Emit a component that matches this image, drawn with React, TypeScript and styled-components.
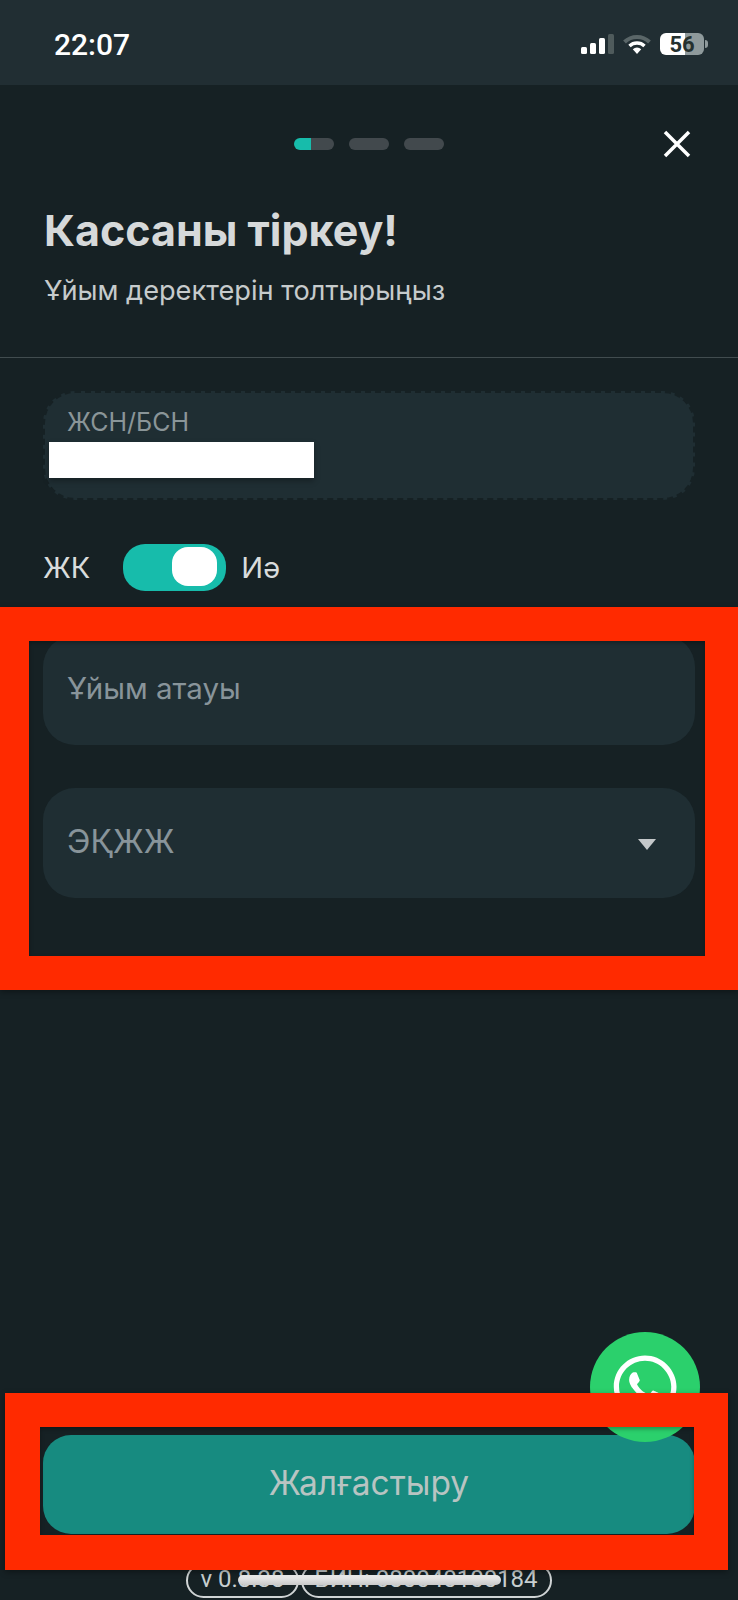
import React from "react";
import styled, { createGlobalStyle } from "styled-components";
import { FaWhatsapp } from "react-icons/fa";

const Global = createGlobalStyle`
  html, body { margin: 0; padding: 0; background: #162124; }
  * { box-sizing: border-box; }
`;

const Page = styled.div`
  position: relative;
  width: 738px;
  height: 1600px;
  overflow: hidden;
  display: flex;
  flex-direction: column;
  background: #162124;
  font-family: "Inter", "Noto Sans", sans-serif;
`;

const StatusBar = styled.div`
  height: 85px;
  flex: none;
  display: flex;
  align-items: center;
  justify-content: space-between;
  padding: 3px 34px 0 54px;
  background: #212e33;
`;

const Time = styled.span`
  font-family: "Roboto", sans-serif;
  font-size: 30px;
  font-weight: 500;
  color: #fff;
`;

const StatusIcons = styled.div`
  display: flex;
  align-items: center;
  gap: 9px;
`;

const Battery = styled.div`
  position: relative;
  width: 44px;
  height: 22px;
  border-radius: 6px;
  display: flex;
  align-items: center;
  justify-content: center;
  background: linear-gradient(90deg, #fff 57%, #8f9a9c 57%);
  font-family: "Roboto", sans-serif;
  font-size: 22px;
  font-weight: 700;
  color: #25312f;
  &::after {
    content: "";
    position: absolute;
    right: -4px;
    top: 7px;
    width: 3px;
    height: 8px;
    border-radius: 0 3px 3px 0;
    background: #8f9a9c;
  }
`;

const StepRow = styled.div`
  display: grid;
  grid-template-columns: 1fr auto 1fr;
  align-items: center;
  height: 40px;
  margin-top: 39px;
  padding: 0 46px;
`;

const Steps = styled.div`
  grid-column: 2;
  display: flex;
  gap: 15px;
`;

const Step = styled.div<{ $fill: number }>`
  width: 40px;
  height: 12px;
  border-radius: 6px;
  background: linear-gradient(90deg, #17bcab ${(p) => p.$fill}%, #42494d ${(p) => p.$fill}%);
`;

const CloseButton = styled.div`
  grid-column: 3;
  justify-self: end;
  display: flex;
  line-height: 0;
`;

const Title = styled.h1`
  margin: 41px 0 0;
  padding: 0 44px;
  height: 50px;
  line-height: 50px;
  font-size: 43px;
  font-weight: 700;
  color: #d6d9da;
`;

const Subtitle = styled.p`
  margin: 20px 0 0;
  padding: 0 44px;
  height: 32px;
  line-height: 32px;
  font-size: 27.2px;
  font-weight: 400;
  color: #c6cbcc;
`;

const Divider = styled.div`
  height: 1px;
  margin-top: 50px;
  background: #414c4f;
`;

const Form = styled.div`
  display: flex;
  flex-direction: column;
  padding: 0 43px;
`;

const IdField = styled.div`
  position: relative;
  height: 109px;
  margin-top: 33px;
  padding: 13px 22px;
  border: 2px dashed #162124;
  border-radius: 32px;
  background: #1f2e33;
  background-clip: border-box;
  font-size: 25px;
  line-height: 32px;
  color: #8a9598;
`;

const Redaction = styled.div`
  position: absolute;
  left: 4px;
  top: 49px;
  width: 265px;
  height: 36px;
  background: #fff;
  box-shadow: 0 3px 6px rgba(0, 0, 0, 0.3);
`;

const ToggleRow = styled.div`
  display: flex;
  align-items: center;
  height: 47px;
  margin-top: 44px;
  font-size: 29px;
  color: #d9dcdc;
`;

const ToggleTrack = styled.div`
  width: 103px;
  height: 47px;
  margin: 0 15px 0 33px;
  padding: 3px 9px;
  display: flex;
  justify-content: flex-end;
  border-radius: 22px;
  background: #17bcab;
`;

const ToggleKnob = styled.div`
  width: 45px;
  height: 39px;
  border-radius: 16px;
  background: #fff;
`;

const Field = styled.div<{ $top: number; $size: number }>`
  display: flex;
  align-items: center;
  justify-content: space-between;
  height: 110px;
  margin-top: ${(p) => p.$top}px;
  padding: 0 48px 4px 24px;
  border-radius: 32px;
  background: #1f2e33;
  font-size: ${(p) => p.$size}px;
  color: #88949a;
`;

const Caret = styled.div`
  width: 0;
  height: 0;
  margin-right: -9px;
  margin-top: 6px;
  border-left: 9px solid transparent;
  border-right: 9px solid transparent;
  border-top: 11px solid #c4c8ca;
`;

const Footer = styled.div`
  position: relative;
  margin-top: auto;
  padding: 0 43px 2px 43px;
  display: flex;
  flex-direction: column;
  align-items: center;
`;

const PrimaryButton = styled.div`
  align-self: stretch;
  height: 99px;
  padding-bottom: 4px;
  display: flex;
  align-items: center;
  justify-content: center;
  border-radius: 28px;
  background: #178b80;
  font-size: 33.5px;
  color: #b8c4c2;
`;

const Badges = styled.div`
  display: flex;
  gap: 2px;
  margin-top: 29px;
`;

const Badge = styled.div`
  height: 35px;
  padding: 0 12px 3px;
  display: flex;
  align-items: center;
  border: 2px solid #d0d4d5;
  border-radius: 18px;
  font-family: "Roboto", sans-serif;
  font-size: 24px;
  color: #c8cfd0;
`;

const Scribble = styled.div`
  position: absolute;
  left: 238px;
  bottom: 15px;
  width: 263px;
  height: 10px;
  border-radius: 5px;
  background: linear-gradient(#f2f2f2, #c9c9c9);
`;

const WhatsApp = styled.div`
  position: absolute;
  left: 590px;
  top: 1332px;
  width: 110px;
  height: 110px;
  border-radius: 50%;
  display: flex;
  align-items: center;
  justify-content: center;
  background: #2bd06c;
  color: #fff;
`;

const RedFrame = styled.div<{ $l: number; $t: number; $w: number; $h: number; $bw: string }>`
  position: absolute;
  left: ${(p) => p.$l}px;
  top: ${(p) => p.$t}px;
  width: ${(p) => p.$w}px;
  height: ${(p) => p.$h}px;
  border-style: solid;
  border-color: #ff2a00;
  border-width: ${(p) => p.$bw};
  box-shadow: 0 2px 6px rgba(0, 0, 0, 0.35), inset 0 2px 4px rgba(0, 0, 0, 0.3);
`;

export default function App() {
  return (
    <Page>
      <Global />
      <StatusBar>
        <Time>22:07</Time>
        <StatusIcons>
          <svg width="33" height="20" viewBox="0 0 33 20">
            <rect x="0" y="13" width="6" height="7" rx="1.5" fill="#fff" />
            <rect x="9" y="9" width="6" height="11" rx="1.5" fill="#fff" />
            <rect x="18" y="4" width="6" height="16" rx="1.5" fill="#fff" />
            <rect x="27" y="0" width="6" height="20" rx="1.5" fill="#4f5b5c" />
          </svg>
          <svg width="28" height="20" viewBox="0 0 28 20">
            <path d="M1.5 8 A18 18 0 0 1 26.5 8" fill="none" stroke="#5a6668" strokeWidth="4" />
            <path d="M6.5 12 A11 11 0 0 1 21.5 12" fill="none" stroke="#fff" strokeWidth="3.4" />
            <path d="M9.8 15.2 A6 6 0 0 1 18.2 15.2 L14 20 Z" fill="#fff" />
          </svg>
          <Battery>56</Battery>
        </StatusIcons>
      </StatusBar>

      <StepRow>
        <Steps>
          <Step $fill={42} />
          <Step $fill={0} />
          <Step $fill={0} />
        </Steps>
        <CloseButton>
          <svg width="30" height="30" viewBox="0 0 30 30">
            <path d="M3 3 L27 27 M27 3 L3 27" stroke="#fff" strokeWidth="3.5" fill="none" />
          </svg>
        </CloseButton>
      </StepRow>

      <Title>Кассаны тіркеу!</Title>
      <Subtitle>Ұйым деректерін толтырыңыз</Subtitle>
      <Divider />

      <Form>
        <IdField>
          ЖСН/БСН
          <Redaction />
        </IdField>
        <ToggleRow>
          ЖК
          <ToggleTrack>
            <ToggleKnob />
          </ToggleTrack>
          Иә
        </ToggleRow>
        <Field $top={44} $size={29.5}>Ұйым атауы</Field>
        <Field $top={43} $size={32}>
          ЭҚЖЖ
          <Caret />
        </Field>
      </Form>

      <Footer>
        <PrimaryButton>Жалғастыру</PrimaryButton>
        <Badges>
          <Badge>v 0.8.38</Badge>
          <Badge>БИН: 080040100184</Badge>
        </Badges>
        <Scribble />
      </Footer>

      <WhatsApp>
        <FaWhatsapp size={72} />
      </WhatsApp>

      <RedFrame $l={0} $t={607} $w={738} $h={383} $bw="34px 33px 34px 29px" />
      <RedFrame $l={5} $t={1393} $w={723} $h={177} $bw="34px 34px 35px 35px" />
    </Page>
  );
}
